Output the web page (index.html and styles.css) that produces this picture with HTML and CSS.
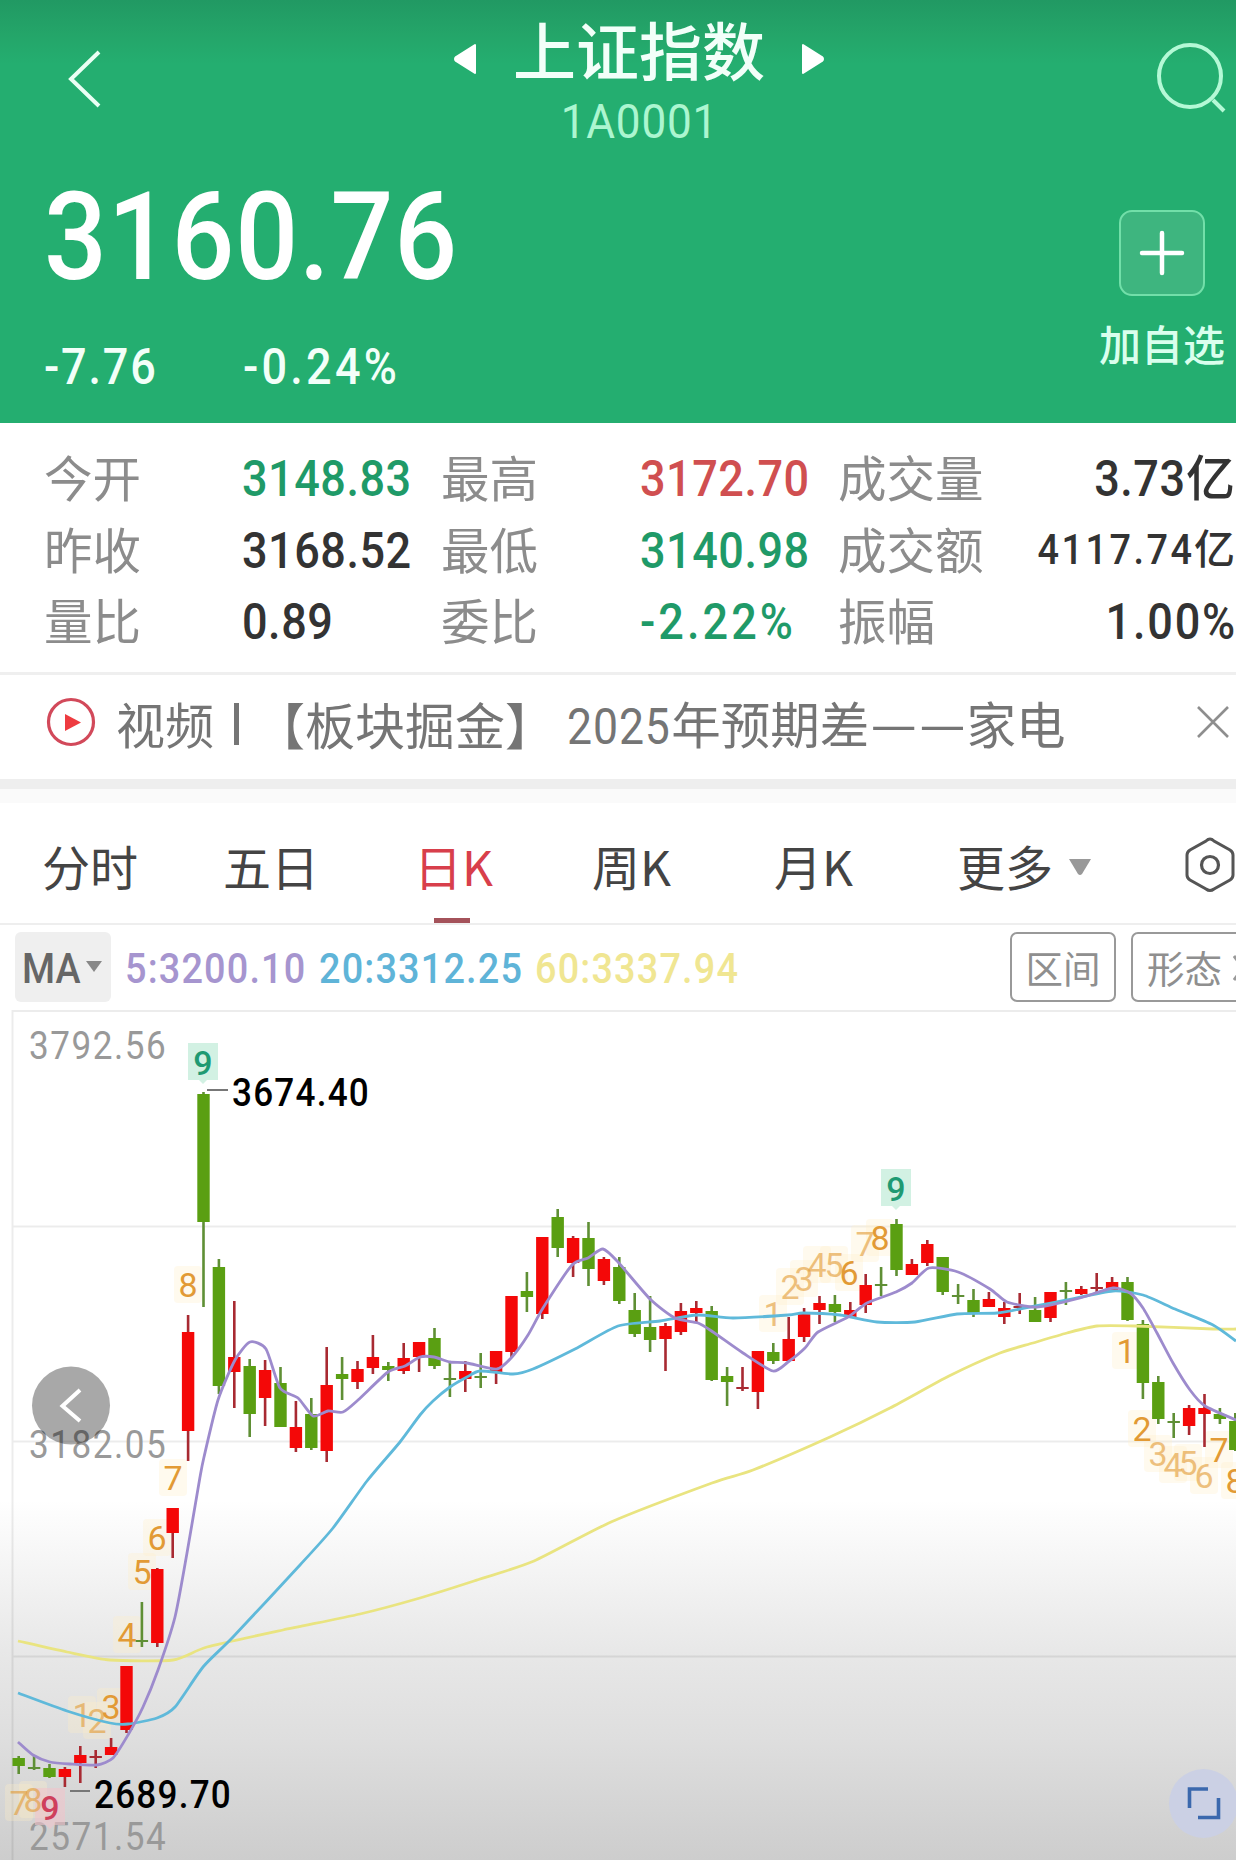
FILE: index.html
```html
<!DOCTYPE html>
<html lang="zh-CN">
<head>
<meta charset="utf-8">
<title>上证指数 1A0001</title>
<link rel="stylesheet" href="styles.css">
</head>
<body>
<div class="app">
  <header class="header">
    <div class="nav">
      <svg class="nav-back" width="36" height="64" viewBox="0 0 36 64"><path d="M32 5 4 32 32 59" fill="none" stroke="#eafff4" stroke-width="4"/></svg>
      <div class="nav-title">
        <div class="title-row">
          <svg width="24" height="36" viewBox="0 0 24 36"><path d="M22 4v28L3 20q-2-2 0-4Z" fill="#fff" stroke="#fff" stroke-width="2" stroke-linejoin="round"/></svg>
          <h1>上证指数</h1>
          <svg width="24" height="36" viewBox="0 0 24 36"><path d="M2 4v28l19-12q2-2 0-4Z" fill="#fff" stroke="#fff" stroke-width="2" stroke-linejoin="round"/></svg>
        </div>
        <div class="code">1A0001</div>
      </div>
      <svg class="nav-search" width="72" height="74" viewBox="0 0 72 74"><circle cx="35" cy="36" r="31" fill="none" stroke="#b4f9d6" stroke-width="4"/><path d="M58 60 69 71" stroke="#b4f9d6" stroke-width="4"/></svg>
    </div>
    <div class="quote">
      <div class="quote-main">
        <div class="price">3160.76</div>
        <div class="change"><div class="diff"><span class="num">-7.76</span></div><span class="num pct">-0.24%</span></div>
      </div>
      <div class="watch">
        <div class="watch-box"><svg width="46" height="46" viewBox="0 0 46 46"><path d="M23 3v40M3 23h40" stroke="#fff" stroke-width="4.5" stroke-linecap="round"/></svg></div>
        <span class="watch-label">加自选</span>
      </div>
    </div>
  </header>

  <section class="stats">
    <span class="k">今开</span><span class="v down"><span class="num">3148.83</span></span><span class="k">最高</span><span class="v up"><span class="num">3172.70</span></span><span class="k">成交量</span><span class="v end"><span class="num">3.73</span>亿</span>
    <span class="k">昨收</span><span class="v"><span class="num">3168.52</span></span><span class="k">最低</span><span class="v down"><span class="num">3140.98</span></span><span class="k">成交额</span><span class="v end small"><span class="num">4117.74</span>亿</span>
    <span class="k">量比</span><span class="v"><span class="num">0.89</span></span><span class="k">委比</span><span class="v down"><span class="num pct">-2.22%</span></span><span class="k">振幅</span><span class="v end"><span class="num amp">1.00%</span></span>
  </section>

  <section class="news">
    <svg width="50" height="50" viewBox="0 0 50 50"><circle cx="25" cy="25" r="22.5" fill="none" stroke="#d2495a" stroke-width="3.2"/><path d="M19 17v17l16-8.500Z" fill="#ee3b40"/></svg>
    <span class="news-kind">视频</span><i class="bar"></i>
    <span class="news-tag">【板块掘金】</span>
    <span class="news-text"><span class="num year">2025</span>年预期差<span class="dash">——</span>家电</span>
    <svg class="close" width="34" height="34" viewBox="0 0 34 34"><path d="M2 2 32 32M32 2 2 32" stroke="#8e8e8e" stroke-width="2.600"/></svg>
  </section>

  <nav class="tabs">
    <span class="tab t1">分时</span><span class="tab t2">五日</span><span class="tab t3 active">日K</span><span class="tab t4">周K</span><span class="tab t5">月K</span>
    <span class="tab t6">更多<svg width="24" height="18" viewBox="0 0 24 18"><path d="M1 1h22L14 16q-2 2-4 0Z" fill="#999"/></svg></span>
    <svg class="gear" width="50" height="58" viewBox="0 0 50 58"><path d="M25 3Q27 3 29 5L45 14Q48 16 48 19V39Q48 42 45 44L29 53Q25 56 21 53L5 44Q2 42 2 39V19Q2 16 5 14L21 5Q23 3 25 3Z" fill="none" stroke="#555" stroke-width="3"/><circle cx="25" cy="29" r="8.500" fill="none" stroke="#555" stroke-width="3.200"/></svg>
  </nav>

  <section class="indicators">
    <div class="ma"><span class="num">MA</span><svg width="16" height="12" viewBox="0 0 16 12"><path d="M0 0h16L8 11Z" fill="#888"/></svg></div>
    <span class="m m5"><span class="num">5:3200.10</span></span><span class="m m20"><span class="num">20:3312.25</span></span><span class="m m60"><span class="num">60:3337.94</span></span>
    <span class="btn">区间</span>
    <span class="btn cut">形态<svg width="20" height="30" viewBox="0 0 20 30"><path d="M1 3 19 27M19 3 1 27" stroke="#999" stroke-width="3"/></svg></span>
  </section>

  <svg class="chart" id="chart" width="1236" height="850" viewBox="0 1010 1236 850">
    <g stroke="#000" stroke-opacity=".075" stroke-width="2">
      <path d="M12.500 1010V1860M12 1011H1236M12 1226.500H1236M12 1441.500H1236M12 1656.500H1236"/>
    </g>
    <g class="axis">
      <text transform="translate(29 1059) scale(.9 1)" textLength="152">3792.56</text>
      <text transform="translate(29 1457.500) scale(.9 1)" textLength="152">3182.05</text>
      <text transform="translate(29 1849.500) scale(.9 1)" textLength="152">2571.54</text>
    </g>
    <g id="halos"></g>
    <g id="counts"></g>
    <g id="candles"></g>
    <g fill="none" stroke-width="2.800" stroke-linejoin="round">
      <path id="ma60" stroke="#e9e480"/>
      <path id="ma20" stroke="#5fb9da"/>
      <path id="ma5" stroke="#9d8bcd"/>
    </g>
    <path d="M207 1090h21M70 1791h20" stroke="#777" stroke-width="2"/>
    <g class="extreme">
      <text transform="translate(232 1106) scale(.9 1)" textLength="152">3674.40</text>
      <text transform="translate(94 1808) scale(.9 1)" textLength="152">2689.70</text>
    </g>
    <circle cx="71" cy="1405.500" r="39" fill="#000" fill-opacity=".34"/>
    <path d="M80 1390 62.500 1406 80 1421" fill="none" stroke="#fff" stroke-width="4"/>
    <circle cx="1203.500" cy="1803.500" r="34.500" fill="#cbd0e4"/>
    <path d="M1189.500 1808V1789H1208M1198 1817.500H1218.500V1798" fill="none" stroke="#3b68ad" stroke-width="3.600"/>
  </svg>
</div>
<script src="chart.js"></script>
</body>
</html>
```
FILE: styles.css
```css
* { box-sizing: border-box; }
body {
  margin: 0;
  background: #fff;
  font-family: "Noto Sans CJK SC", "Noto Sans", sans-serif;
  color: #333;
}
.app { width: 1236px; height: 1860px; overflow: hidden; display: flex; flex-direction: column; }
svg { display: block; flex: none; }

/* Condensed numerals */
.num, .price, .code { display: inline-block; font-family: Roboto, sans-serif; transform: scaleX(.9); transform-origin: 0 50%; }

.header {
  height: 423px;
  flex: none;
  color: #f2fff9;
  background: linear-gradient(#219963 0, #24a569 34px, #24ae70 64px);
}
.nav { display: flex; justify-content: space-between; align-items: flex-start; height: 160px; padding: 0 9px 0 67px; }
.nav-back { margin-top: 47px; }
.nav-search { margin-top: 40px; }
.nav-title { display: flex; flex-direction: column; align-items: center; padding: 5px 0 0 20px; }
.title-row { display: flex; align-items: center; gap: 36px; height: 86px; }
.title-row svg { margin-top: 21px; }
h1 { margin: 0; font-size: 63px; line-height: 86px; font-weight: 500; white-space: nowrap; }
.code { font-size: 49px; line-height: 62px; letter-spacing: .9px; padding-left: 2px; transform-origin: 50% 50%; color: #acf6d0; }
.quote { display: flex; justify-content: space-between; padding: 0 11px 0 44px; }
.price { display: block; height: 152px; font-size: 123px; line-height: 154px; font-weight: 500; letter-spacing: .9px; color: #fff; }
.change { display: flex; font-size: 50px; line-height: 60px; font-weight: 500; margin-top: 25px; }
.change .num { letter-spacing: 2px; }
.change .pct { letter-spacing: 3.600px; }
.diff { display: flex; width: 199px; }
.watch { display: flex; flex-direction: column; align-items: center; padding-top: 50px; }
.watch-box { width: 86px; height: 86px; display: flex; align-items: center; justify-content: center; border: 2px solid #72dfa9; border-radius: 13px; background: #3eb57f; }
.watch-label { margin-top: 17px; font-size: 42px; line-height: 60px; font-weight: 500; color: #d9ffed; }

.stats {
  display: grid;
  grid-template-columns: 198px 199px 199px 198px 130px 1fr;
  grid-auto-rows: 71.500px;
  height: 252px;
  flex: none;
  padding: 18px 1px 0 44px;
  border-bottom: 3px solid #efefef;
  line-height: 71px;
  white-space: nowrap;
}
.k { font-size: 48.500px; color: #8c8c8c; }
.v { font-size: 49px; font-weight: 500; line-height: 68px; }
.v .num { font-size: 50px; letter-spacing: .6px; }
.v .pct { letter-spacing: 3.400px; }
.end { justify-self: end; }
.end .num { transform-origin: 100% 50%; }
.v .amp { letter-spacing: 2px; margin-right: -2px; }
.small { font-size: 41px; line-height: 67px; }
.small .num { font-size: 42px; letter-spacing: 2.800px; }
.up { color: #d04f50; }
.down { color: #1f9a68; }

.news {
  height: 128px;
  flex: none;
  display: flex;
  align-items: center;
  padding: 0 6px 34px 46px;
  font-size: 49.500px;
  line-height: 72px;
  color: #757575;
  white-space: nowrap;
  background: linear-gradient(#fff 0 104px, #eee 104px 114px, #fafafa 114px);
}
.news-kind, .news-tag, .news-text { height: 70px; }
.news-kind { margin-left: 20px; font-size: 49px; }
.bar { width: 5px; height: 42px; margin: 4px 16px 0 20px; background: #757575; }
.news-tag { font-size: 50px; }
.news-text { margin-left: 12px; font-size: 49.500px; }
.year { letter-spacing: 1px; margin-right: -11px; }
.dash { font-family: Roboto, sans-serif; font-size: 63px; font-weight: 300; line-height: 1px; vertical-align: -7px; }
.close { margin-left: auto; }

.tabs {
  height: 122px;
  flex: none;
  display: flex;
  align-items: center;
  padding: 8px 0 0 42px;
  border-bottom: 2px solid #eee;
  font-size: 48px;
  line-height: 108px;
  color: #444;
  white-space: nowrap;
}
.tab { height: 112px; flex: none; }
.t1, .t2 { width: 181px; }
.t3 { width: 188px; padding-left: 10px; }
.t4 { width: 182px; }
.t5 { width: 183px; }
.t6 { width: 228px; height: 108px; margin-top: -4px; display: flex; align-items: center; gap: 15px; }
.t6 svg { margin-top: 4px; }
.active { color: #d83f4b; background: linear-gradient(#a4525a, #a4525a) 30px 107px / 36px 5px no-repeat; }
.gear { margin-top: -5px; }

.indicators {
  height: 85px;
  flex: none;
  display: flex;
  align-items: flex-start;
  padding: 7px 0 0 15px;
  line-height: 70px;
  overflow: hidden;
  white-space: nowrap;
}
.ma { width: 96px; height: 70px; flex: none; padding-left: 7px; display: flex; align-items: center; border-radius: 6px; background: #efefef; font-size: 42px; font-weight: 500; color: #666; }
.ma .num { width: 64px; line-height: 70px; padding-top: 3px; }
.m { display: flex; font-size: 42px; font-weight: 500; flex: none; line-height: 74px; }
.m .num { letter-spacing: 1.300px; }
.m5 { width: 194px; margin-left: 14px; color: #a695cf; }
.m20 { width: 216px; color: #5fb4d8; }
.m60 { width: 475px; color: #f0e692; }
.btn { height: 70px; flex: none; width: 106px; line-height: 66px; text-align: center; border: 2px solid #999; border-radius: 7px; font-size: 37.500px; color: #8f8f8f; }
.cut { width: 140px; margin-left: 15px; padding-left: 14px; display: flex; align-items: flex-start; gap: 11px; }
.cut svg { margin-top: 19px; }

.chart { background: linear-gradient(#fff 0, #fff 490px, #f1f1f1 580px, #e8e8e8 640px, #dedede 730px, #cdcdcd 850px); }
.chart text { font-family: Roboto, sans-serif; }
.axis { font-size: 39px; fill: #999; }
.extreme { font-size: 39px; font-weight: 500; fill: #000; }
.count { font-size: 34px; font-weight: 400; text-anchor: middle; fill: #e29a35; }
.count.faint { opacity: .6; }
.count.green { fill: #1f9a72; font-weight: 500; }
.count.red { fill: #cf405c; font-weight: 500; }
```
FILE: chart.js
```js
// Each candle: colour, high, low, body top, body bottom (chart y units)
const candles = [
  ['g',1756,1774,1758,1766],['g',1755,1770,1767,1769],['g',1764,1778,1768,1777],['r',1767,1787,1769,1777],
  ['r',1746,1783,1755,1763],['r',1750,1768,1756,1758],['r',1738,1755,1747,1755],['r',1666,1733,1666,1730],
  ['g',1602,1647,1640,1642],['r',1568,1647,1569,1643],['r',1508,1558,1508,1533],['r',1315,1461,1332,1431],
  ['g',1092,1307,1094,1222],['g',1259,1394,1267,1386],['r',1301,1408,1357,1372],['g',1359,1437,1366,1414],
  ['r',1360,1426,1370,1398],['g',1367,1427,1383,1427],['r',1401,1452,1427,1448],['g',1398,1450,1414,1448],
  ['r',1347,1462,1385,1451],['g',1357,1400,1374,1379],['r',1361,1389,1369,1382],['r',1335,1374,1357,1368],
  ['g',1362,1381,1366,1370],['r',1343,1374,1358,1371],['r',1342,1372,1342,1357],['g',1328,1369,1338,1366],
  ['g',1362,1397,1378,1380],['r',1361,1392,1371,1379],['g',1353,1388,1376,1378],['r',1351,1384,1351,1372],
  ['r',1296,1357,1296,1352],['g',1272,1312,1291,1297],['r',1237,1319,1237,1314],['g',1209,1257,1217,1248],
  ['r',1236,1277,1238,1263],['g',1222,1286,1238,1269],['r',1257,1285,1259,1281],['g',1257,1304,1267,1301],
  ['g',1293,1337,1310,1334],['g',1296,1352,1327,1340],['r',1323,1371,1326,1339],['r',1303,1335,1311,1332],
  ['r',1301,1323,1308,1313],['g',1306,1381,1311,1380],['g',1367,1406,1376,1382],['r',1367,1391,1387,1389],
  ['r',1351,1409,1351,1392],['g',1343,1364,1352,1361],['r',1317,1361,1339,1361],['r',1308,1342,1314,1337],
  ['r',1296,1324,1303,1310],['g',1295,1322,1304,1312],['r',1302,1318,1310,1317],['r',1274,1313,1285,1305],
  ['g',1267,1296,1284,1286],['g',1219,1276,1224,1270],['r',1259,1275,1264,1275],['r',1240,1266,1244,1263],
  ['g',1257,1295,1257,1292],['g',1284,1304,1295,1297],['g',1289,1317,1300,1313],['r',1292,1307,1299,1307],
  ['r',1302,1324,1308,1317],['r',1293,1314,1306,1308],['g',1297,1322,1310,1322],['r',1292,1322,1292,1318],
  ['g',1282,1305,1290,1292],['r',1286,1295,1289,1294],['r',1273,1295,1287,1289],['r',1277,1291,1282,1290],
  ['g',1277,1321,1282,1320],['g',1320,1399,1324,1383],['g',1376,1424,1382,1419],['g',1413,1438,1421,1423],
  ['r',1405,1435,1408,1426],['r',1394,1447,1408,1414],['g',1408,1424,1414,1419],['g',1413,1451,1421,1450]
];

const lines = {
  ma5: '18,1742 33,1755 50,1762 70,1764 97,1765 113,1758 128,1735 143,1707 158,1670 175,1617 187,1553 200,1477 204,1457 218,1400 235,1360 250,1342 266,1349 280,1388 298,1398 313,1416 328,1411 343,1412 358,1400 388,1372 405,1366 420,1357 434,1357 450,1362 467,1363 497,1369 512,1357 528,1335 543,1308 572,1265 588,1258 603,1249 618,1262 650,1299 675,1318 698,1323 713,1332 743,1353 773,1371 788,1362 805,1348 818,1332 848,1317 867,1303 896,1292 912,1283 929,1268 958,1272 990,1289 1007,1302 1033,1307 1050,1305 1080,1298 1113,1288 1130,1293 1143,1308 1157,1333 1173,1363 1190,1390 1205,1406 1236,1420',
  ma20: '18,1693 67,1711 110,1723 128,1724 157,1718 175,1707 203,1667 233,1637 300,1565 333,1528 367,1481 400,1442 420,1415 433,1401 450,1387 467,1377 480,1371 513,1374 533,1369 575,1349 618,1326 660,1321 697,1315 733,1318 788,1315 803,1313 840,1315 877,1322 915,1322 957,1314 997,1313 1030,1307 1067,1300 1113,1291 1143,1295 1175,1309 1213,1325 1236,1341',
  ma60: '18,1641 67,1652 110,1660 173,1660 207,1647 283,1630 360,1614 420,1598 474,1581 534,1561 611,1522 712,1483 753,1470 830,1437 890,1408 949,1376 1000,1353 1033,1343 1067,1333 1097,1326 1135,1326 1213,1329 1236,1329'
};

// Each count: text, centre x, baseline, style
const counts = [
  ['8',188,1297],['7',173,1490],['6',157,1550],['5',142,1584],['4',127,1647],['3',111,1719],
  ['2',97,1733,'faint'],['1',82,1727,'faint'],['7',19,1815,'faint'],['8',33,1812,'faint'],
  ['1',773,1326,'faint'],['2',790,1299,'faint'],['3',804,1291,'faint'],['4',817,1277,'faint'],
  ['5',834,1277,'faint'],['6',849,1285],['7',865,1256,'faint'],['8',880,1250],
  ['1',1126,1363],['2',1142,1441],['3',1158,1466,'faint'],['4',1173,1477,'faint'],['5',1188,1475,'faint'],
  ['6',1204,1488,'faint'],['7',1219,1462],['8',1235,1493],
  ['9',203,1075,'green'],['9',896,1201,'green'],['9',50,1820,'red']
];

const smooth = (str) => {
  const p = str.split(' ').map((s) => s.split(',').map(Number));
  let d = `M${p[0]}`;
  for (let i = 0; i < p.length - 1; i++) {
    const a = p[i - 1] || p[i], b = p[i], c = p[i + 1], e = p[i + 2] || c;
    d += `C${b[0] + (c[0] - a[0]) / 9},${b[1] + (c[1] - a[1]) / 9} ${c[0] - (e[0] - b[0]) / 9},${c[1] - (e[1] - b[1]) / 9} ${c}`;
  }
  return d;
};
for (const id in lines) document.getElementById(id).setAttribute('d', smooth(lines[id]));

document.getElementById('candles').innerHTML = candles.map(([c, hi, lo, top, bottom], i) => {
  const x = 18.7 + i * 15.4;
  const body = c === 'g' ? '#5a9f12' : '#f40808';
  const wick = c === 'g' ? '#5f8f35' : '#a82a32';
  return `<rect x="${x - 1.3}" y="${hi}" width="2.6" height="${lo - hi}" fill="${wick}"/>` +
    `<rect x="${x - 6.2}" y="${top}" width="12.4" height="${bottom - top}" fill="${bottom - top < 3 ? wick : body}"/>`;
}).join('');

const boxes = { green: '#d2f1e3', red: '#f0c4cc' };
document.getElementById('halos').innerHTML = counts.map(([, x, y, k]) =>
  boxes[k]
    ? `<path d="M${x - 15} ${y - 32}h30v37h-11l-4 4-4-4h-11Z" fill="${boxes[k]}" opacity="${k === 'red' ? .6 : 1}"/>`
    : `<rect x="${x - 14}" y="${y - 31}" width="28" height="37" rx="4" fill="#fff0c8" opacity=".3"/>`
).join('');
document.getElementById('counts').innerHTML = counts.map(([t, x, y, k]) =>
  `<text class="count ${k || ''}" x="${x}" y="${y}">${t}</text>`).join('');
```
